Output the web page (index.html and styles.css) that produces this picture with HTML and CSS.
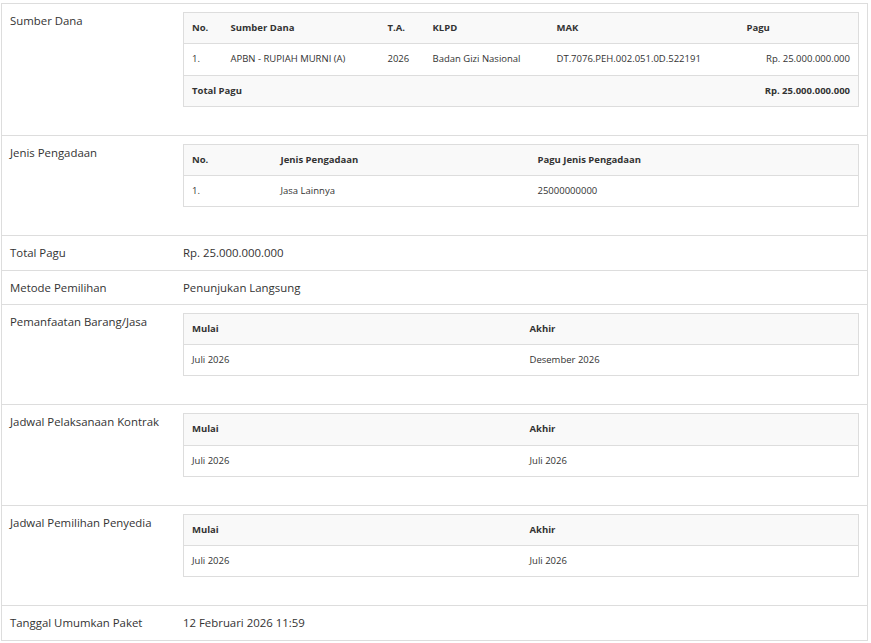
FILE: index.html
```html
<!DOCTYPE html>
<html lang="id">
<head>
<meta charset="utf-8">
<title>Detail Paket</title>
<link rel="stylesheet" href="styles.css">
</head>
<body>
<div class="wrap">
<table class="detail">
  <tr>
    <td class="label">Sumber Dana</td>
    <td class="value">
      <table class="inner">
        <colgroup><col class="c-no"><col class="c-sd"><col class="c-ta"><col class="c-klpd"><col class="c-mak"><col></colgroup>
        <thead>
          <tr><th>No.</th><th>Sumber Dana</th><th>T.A.</th><th>KLPD</th><th>MAK</th><th>Pagu</th></tr>
        </thead>
        <tbody>
          <tr><td>1.</td><td>APBN - RUPIAH MURNI (A)</td><td>2026</td><td>Badan Gizi Nasional</td><td>DT.7076.PEH.002.051.0D.522191</td><td class="right">Rp. 25.000.000.000</td></tr>
          <tr class="total"><td colspan="5">Total Pagu</td><td class="right">Rp. 25.000.000.000</td></tr>
        </tbody>
      </table>
    </td>
  </tr>
  <tr>
    <td class="label">Jenis Pengadaan</td>
    <td class="value">
      <table class="inner">
        <colgroup><col class="c-jno"><col class="c-jp"><col></colgroup>
        <thead>
          <tr><th>No.</th><th>Jenis Pengadaan</th><th>Pagu Jenis Pengadaan</th></tr>
        </thead>
        <tbody>
          <tr><td>1.</td><td>Jasa Lainnya</td><td>25000000000</td></tr>
        </tbody>
      </table>
    </td>
  </tr>
  <tr>
    <td class="label">Total Pagu</td>
    <td class="value">Rp. 25.000.000.000</td>
  </tr>
  <tr>
    <td class="label">Metode Pemilihan</td>
    <td class="value">Penunjukan Langsung</td>
  </tr>
  <tr>
    <td class="label">Pemanfaatan Barang/Jasa</td>
    <td class="value">
      <table class="inner">
        <colgroup><col class="c-half"><col></colgroup>
        <thead><tr><th>Mulai</th><th>Akhir</th></tr></thead>
        <tbody><tr><td>Juli 2026</td><td>Desember 2026</td></tr></tbody>
      </table>
    </td>
  </tr>
  <tr>
    <td class="label">Jadwal Pelaksanaan Kontrak</td>
    <td class="value">
      <table class="inner">
        <colgroup><col class="c-half"><col></colgroup>
        <thead><tr><th>Mulai</th><th>Akhir</th></tr></thead>
        <tbody><tr><td>Juli 2026</td><td>Juli 2026</td></tr></tbody>
      </table>
    </td>
  </tr>
  <tr>
    <td class="label">Jadwal Pemilihan Penyedia</td>
    <td class="value">
      <table class="inner">
        <colgroup><col class="c-half"><col></colgroup>
        <thead><tr><th>Mulai</th><th>Akhir</th></tr></thead>
        <tbody><tr><td>Juli 2026</td><td>Juli 2026</td></tr></tbody>
      </table>
    </td>
  </tr>
  <tr>
    <td class="label">Tanggal Umumkan Paket</td>
    <td class="value">12 Februari 2026 11:59</td>
  </tr>
</table>
</div>
</body>
</html>
```
FILE: styles.css
```css
html, body {
  margin: 0;
  padding: 0;
  background: #fff;
}
body {
  font-family: "Open Sans", "Liberation Sans", sans-serif;
  color: #333;
}
.wrap {
  padding: 3px 0 0 1px;
}
.detail {
  width: 867px;
  border-collapse: collapse;
  border-left: 1px solid #ddd;
  border-right: 1px solid #ddd;
  font-size: 11.4px;
  line-height: 17.143px;
}
.detail > tbody > tr > td,
.detail > tr > td {
  border-top: 1px solid #ddd;
  border-bottom: 1px solid #ddd;
  padding: 8px;
  vertical-align: top;
  text-align: left;
}
.detail .label {
  width: 157px;
}
.inner {
  width: 100%;
  border-collapse: collapse;
  border: 1px solid #ddd;
  table-layout: fixed;
  font-size: 9.5px;
  line-height: 14.286px;
  margin-bottom: 20px;
}
.inner th,
.inner td {
  padding: 8px;
  text-align: left;
  vertical-align: top;
  border-top: 1px solid #ddd;
  white-space: nowrap;
}
.inner thead th {
  background: #f9f9f9;
  font-weight: 700;
  border-bottom: 1px solid #ddd;
  color: #333;
}
.inner .right {
  text-align: right;
}
.inner .total td {
  background: #f9f9f9;
  font-weight: 700;
}
.c-no { width: 39px; }
.c-sd { width: 157px; }
.c-ta { width: 45px; }
.c-klpd { width: 124px; }
.c-mak { width: 190px; }
.c-jno { width: 89px; }
.c-jp { width: 257px; }
.c-half { width: 338px; }
```
